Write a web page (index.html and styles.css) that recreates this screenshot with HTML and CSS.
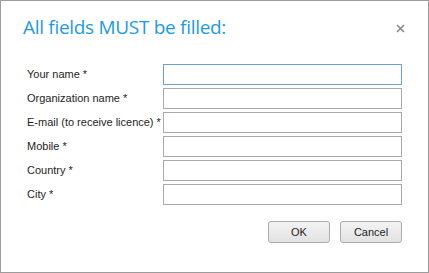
FILE: index.html
```html
<!DOCTYPE html>
<html>
<head>
<meta charset="utf-8">
<link rel="stylesheet" href="styles.css">
</head>
<body>
<div class="dialog">
  <div class="header">
    <h1 class="title">All fields MUST be filled:</h1>
    <svg class="close" width="9" height="9" viewBox="0 0 9 9"><path d="M1 1 L8 8 M8 1 L1 8" stroke="#8a8a8a" stroke-width="1.6" fill="none"/></svg>
  </div>
  <div class="form">
    <label class="label">Your name *</label><input class="field focused" type="text">
    <label class="label">Organization name *</label><input class="field" type="text">
    <label class="label">E-mail (to receive licence) *</label><input class="field" type="text">
    <label class="label">Mobile *</label><input class="field" type="text">
    <label class="label">Country *</label><input class="field" type="text">
    <label class="label">City *</label><input class="field" type="text">
  </div>
  <div class="buttons">
    <button class="btn">OK</button>
    <button class="btn">Cancel</button>
  </div>
</div>
</body>
</html>
```
FILE: styles.css
```css
html, body {
  margin: 0;
  padding: 0;
  background: #ffffff;
}
.dialog {
  width: 429px;
  height: 273px;
  box-sizing: border-box;
  border: 1px solid #9c9c9c;
  background: #ffffff;
  font-family: "Liberation Sans", Arial, sans-serif;
}
.header {
  display: flex;
  justify-content: space-between;
  align-items: flex-start;
  height: 63px;
  box-sizing: border-box;
  padding: 14px 23px 0 22px;
}
.title {
  margin: 0;
  font-family: "Open Sans", sans-serif;
  font-weight: normal;
  font-size: 19px;
  line-height: 24px;
  color: #1e9ae0;
  letter-spacing: -0.3px;
}
.close {
  margin-top: 9px;
  display: block;
}
.form {
  display: grid;
  grid-template-columns: 136px 239px;
  grid-auto-rows: 21px;
  row-gap: 3px;
  padding-left: 26px;
}
.label {
  font-size: 11px;
  line-height: 21px;
  color: #1e1e1e;
  white-space: nowrap;
}
.field {
  box-sizing: border-box;
  width: 239px;
  height: 21px;
  margin: 0;
  padding: 0 3px;
  border: 1px solid #ababab;
  background: #ffffff;
  outline: none;
}
.field.focused {
  border-color: #6a9fd9;
}
.buttons {
  display: flex;
  justify-content: flex-end;
  gap: 10px;
  margin-top: 16px;
  padding-right: 26px;
}
.btn {
  box-sizing: border-box;
  width: 62px;
  height: 22px;
  margin: 0;
  padding: 0;
  border: 1px solid #acacac;
  border-radius: 3px;
  background: linear-gradient(#f3f3f3, #e2e2e2);
  font-family: "Liberation Sans", Arial, sans-serif;
  font-size: 11px;
  color: #1e1e1e;
}
```
